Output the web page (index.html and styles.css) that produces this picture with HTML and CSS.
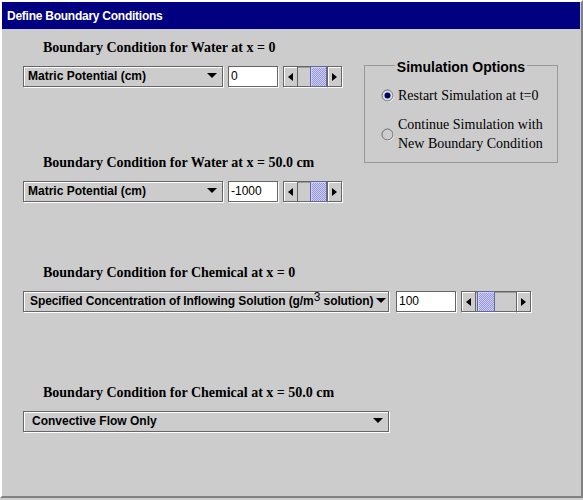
FILE: index.html
```html
<!DOCTYPE html>
<html>
<head>
<meta charset="utf-8">
<link rel="stylesheet" href="styles.css">
</head>
<body>
<div class="window">
  <div class="titlebar">Define Boundary Conditions</div>
  <div class="content">
    <div class="top">
      <div class="leftcol">
        <section class="sec">
          <div class="heading">Boundary Condition for Water at x = 0</div>
          <div class="row">
            <div class="combo w200"><span class="ctext">Matric Potential (cm)</span><span class="carrow"></span></div>
            <div class="field w50">0</div>
            <div class="scroll w59">
              <div class="sbtn"><span class="al"></span></div>
              <div class="track"><div class="thumb" style="margin-left:12px"></div></div>
              <div class="sbtn"><span class="ar"></span></div>
            </div>
          </div>
        </section>
        <section class="sec sec2">
          <div class="heading">Boundary Condition for Water at x = 50.0 cm</div>
          <div class="row">
            <div class="combo w200"><span class="ctext">Matric Potential (cm)</span><span class="carrow"></span></div>
            <div class="field w50">-1000</div>
            <div class="scroll w59">
              <div class="sbtn"><span class="al"></span></div>
              <div class="track"><div class="thumb" style="margin-left:12px"></div></div>
              <div class="sbtn"><span class="ar"></span></div>
            </div>
          </div>
        </section>
      </div>
      <div class="group">
        <div class="gtitle"><span>Simulation Options</span></div>
        <div class="radio r1">
          <svg width="13" height="13" viewBox="0 0 13 13"><circle cx="6.5" cy="6.5" r="5.5" fill="#e6e6e6" stroke="#ffffff" stroke-width="1" transform="translate(0.6 0.6)"/><circle cx="6.5" cy="6.5" r="5.5" fill="#dcdcdc" stroke="#666666" stroke-width="1"/><circle cx="6.5" cy="6.5" r="3" fill="#000066"/></svg>
          <span>Restart Simulation at t=0</span>
        </div>
        <div class="radio r2">
          <svg width="13" height="13" viewBox="0 0 13 13"><circle cx="6.5" cy="6.5" r="5.5" fill="#cccccc" stroke="#ffffff" stroke-width="1" transform="translate(0.6 0.6)"/><circle cx="6.5" cy="6.5" r="5.5" fill="#cccccc" stroke="#666666" stroke-width="1"/></svg>
          <span>Continue Simulation with<br>New Boundary Condition</span>
        </div>
      </div>
    </div>
    <section class="sec sec3">
      <div class="heading">Boundary Condition for Chemical at x = 0</div>
      <div class="row">
        <div class="combo w366 long"><span class="ctext">Specified Concentration of Inflowing Solution (g/m<sup>3</sup> solution)</span><span class="carrow"></span></div>
        <div class="field w60 gap7">100</div>
        <div class="scroll w70">
          <div class="sbtn"><span class="al"></span></div>
          <div class="track"><div class="thumb wide" style="margin-left:1px"></div></div>
          <div class="sbtn"><span class="ar"></span></div>
        </div>
      </div>
    </section>
    <section class="sec sec4">
      <div class="heading">Boundary Condition for Chemical at x = 50.0 cm</div>
      <div class="row">
        <div class="combo w366 conv"><span class="ctext">Convective Flow Only</span><span class="carrow"></span></div>
      </div>
    </section>
  </div>
</div>
</body>
</html>
```

FILE: styles.css
```css
html, body {
  margin: 0;
  padding: 0;
  background: #cccccc;
}

.window {
  width: 583px;
  height: 498px;
  box-sizing: border-box;
  border-top: 2px solid #ffffff;
  border-left: 2px solid #ffffff;
  border-right: 2px solid #808080;
  border-bottom: 2px solid #808080;
  background: #cccccc;
}

.titlebar {
  height: 27px;
  margin-right: 1px;
  box-sizing: border-box;
  padding: 2px 0 0 5px;
  line-height: 25px;
  background: #000080;
  color: #ffffff;
  font-family: "Liberation Sans", Arial, sans-serif;
  font-weight: bold;
  font-size: 12px;
  letter-spacing: -0.25px;
  white-space: nowrap;
}

.content {
  padding: 11px 0 0 21px;
  font-family: "Liberation Sans", Arial, sans-serif;
  font-size: 12px;
  color: #000000;
}

.top {
  display: flex;
  align-items: flex-start;
}

.leftcol {
  width: 341px;
  flex: none;
}

.sec2 { margin-top: 68px; }
.sec3 { margin-top: 63px; }
.sec4 { margin-top: 73px; }

.heading {
  padding-left: 20px;
  height: 16px;
  line-height: 16px;
  font-family: "Liberation Serif", "Times New Roman", serif;
  font-weight: bold;
  font-size: 14px;
  white-space: nowrap;
}

.row {
  display: flex;
  align-items: flex-start;
  margin-top: 10px;
}

.combo {
  display: flex;
  align-items: center;
  height: 21px;
  box-sizing: border-box;
  border: 1px solid #666666;
  box-shadow: inset 1px 1px 0 #ffffff, 1px 1px 0 #ffffff;
  background: #cccccc;
  padding-left: 4px;
  font-weight: bold;
  font-size: 12px;
  white-space: nowrap;
  flex: none;
}

.combo.long { padding-left: 6px; }
.combo.conv { padding-left: 8px; }

.w200 { width: 200px; }
.w366 { width: 366px; }

.ctext {
  flex: 1;
  overflow: hidden;
  line-height: 19px;
}

.combo.long .ctext {
  flex: none;
  overflow: visible;
  letter-spacing: -0.1px;
}

.ctext sup {
  font-weight: normal;
  font-size: 12px;
  vertical-align: 4px;
  line-height: 0;
  letter-spacing: 0;
}

.carrow {
  flex: none;
  width: 0;
  height: 0;
  border-left: 5px solid transparent;
  border-right: 5px solid transparent;
  border-top: 5px solid #000000;
  margin-right: 5px;
  margin-bottom: 2px;
}

.combo.long .carrow { margin-right: 0; margin-left: 3px; }

.field {
  height: 21px;
  box-sizing: border-box;
  border: 1px solid #666666;
  box-shadow: 1px 1px 0 #ffffff;
  background: #ffffff;
  padding-left: 2px;
  line-height: 19px;
  font-size: 12px;
  margin-left: 5px;
  flex: none;
  white-space: nowrap;
  overflow: hidden;
}

.field.gap7 { margin-left: 7px; }
.w50 { width: 50px; }
.w60 { width: 60px; }

.scroll {
  display: flex;
  height: 21px;
  margin-left: 5px;
  flex: none;
}

.w59 { width: 59px; }
.w70 { width: 70px; }

.sbtn {
  width: 15px;
  flex: none;
  box-sizing: border-box;
  border: 1px solid #666666;
  box-shadow: inset 1px 1px 0 #ffffff, 1px 1px 0 #ffffff;
  background: #cccccc;
  display: flex;
  align-items: center;
  justify-content: center;
}

.al {
  width: 0;
  height: 0;
  border-top: 4px solid transparent;
  border-bottom: 4px solid transparent;
  border-right: 5px solid #000000;
}

.ar {
  width: 0;
  height: 0;
  border-top: 4px solid transparent;
  border-bottom: 4px solid transparent;
  border-left: 5px solid #000000;
}

.track {
  flex: 1;
  display: flex;
  box-sizing: border-box;
  border-top: 1px solid #666666;
  border-bottom: 1px solid #666666;
  box-shadow: inset 0 1px 0 #999999, 0 1px 0 #ffffff;
  background: #cccccc;
}

.thumb {
  width: 17px;
  box-sizing: border-box;
  border: 1px solid #666699;
  margin-top: -1px;
  margin-bottom: -1px;
  background-color: #aaaadd;
  background-image: repeating-conic-gradient(#9999cc 0 25%, #ccccff 0 50%);
  background-size: 2px 2px;
  box-shadow: inset 1px 1px 0 #ccccff;
}

.thumb.wide { width: 18px; }

.group {
  width: 194px;
  height: 98px;
  box-sizing: border-box;
  border: 1px solid #999999;
  margin-top: 25px;
  flex: none;
}

.gtitle {
  margin-top: -7px;
  height: 16px;
  line-height: 16px;
  text-align: center;
  font-family: "Liberation Sans", Arial, sans-serif;
  font-weight: bold;
  font-size: 14px;
  white-space: nowrap;
}

.gtitle span {
  background: #cccccc;
  padding: 0 2px;
}

.radio {
  display: flex;
  align-items: center;
  gap: 4px;
  padding-left: 16px;
  font-family: "Liberation Serif", "Times New Roman", serif;
  font-size: 14px;
  line-height: 19px;
  white-space: nowrap;
}

.radio svg {
  flex: none;
  display: block;
}

.r1 { margin-top: 11px; }
.r2 { margin-top: 10px; }
```
